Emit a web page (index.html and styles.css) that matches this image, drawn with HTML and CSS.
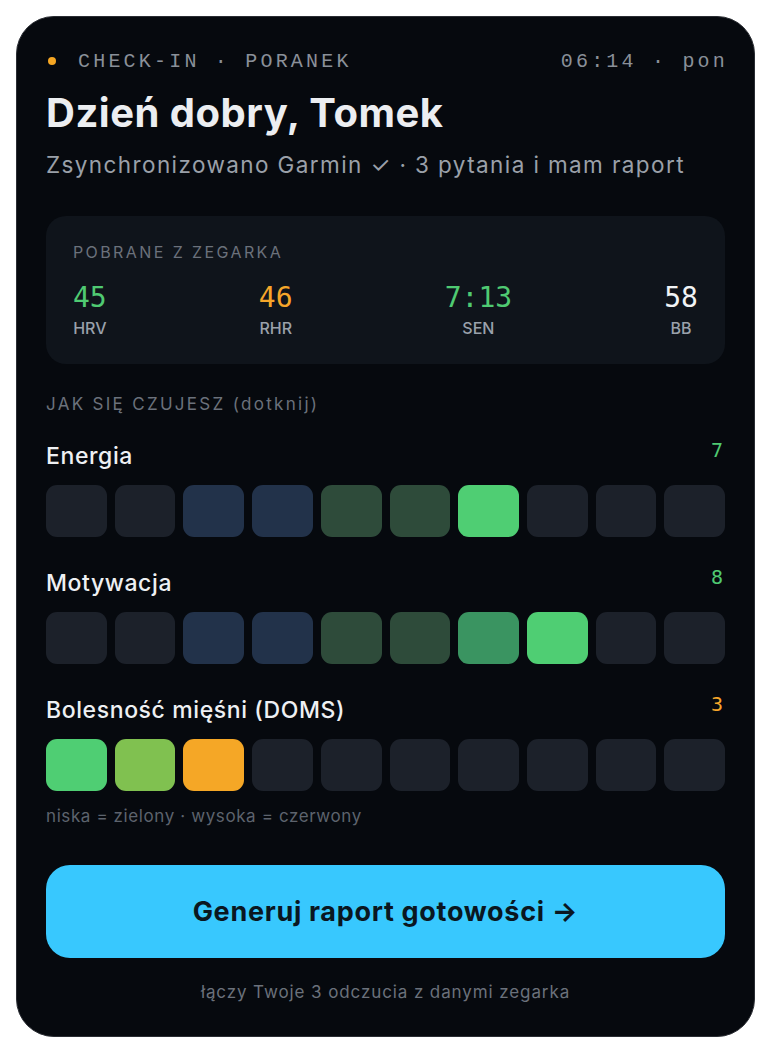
FILE: index.html
```html
<!DOCTYPE html>
<html lang="pl">
<head>
    <meta charset="UTF-8">
    <meta name="viewport" content="width=device-width, initial-scale=1.0">
    <link rel="stylesheet" href="styles.css">
</head>
<body>
    <div class="card">
        <div class="top-bar">
            <span class="top-left"><span class="dot"></span>CHECK-IN · PORANEK</span>
            <span class="top-right">06:14 · pon</span>
        </div>

        <h1 class="title">Dzień dobry, Tomek</h1>
        <p class="subtitle">Zsynchronizowano Garmin ✓ · 3 pytania i mam raport</p>

        <div class="watch-panel">
            <div class="panel-label">POBRANE Z ZEGARKA</div>
            <div class="stats">
                <div class="stat">
                    <div class="stat-value good">45</div>
                    <div class="stat-name">HRV</div>
                </div>
                <div class="stat">
                    <div class="stat-value warn">46</div>
                    <div class="stat-name">RHR</div>
                </div>
                <div class="stat">
                    <div class="stat-value good">7:13</div>
                    <div class="stat-name">SEN</div>
                </div>
                <div class="stat">
                    <div class="stat-value plain">58</div>
                    <div class="stat-name">BB</div>
                </div>
            </div>
        </div>

        <div class="section-label">JAK SIĘ CZUJESZ (dotknij)</div>

        <div class="rating">
            <div class="rating-head">
                <span class="rating-name">Energia</span>
                <span class="rating-value good">7</span>
            </div>
            <div class="scale">
                <span class="cell"></span>
                <span class="cell"></span>
                <span class="cell blue"></span>
                <span class="cell blue"></span>
                <span class="cell moss"></span>
                <span class="cell moss"></span>
                <span class="cell green"></span>
                <span class="cell"></span>
                <span class="cell"></span>
                <span class="cell"></span>
            </div>
        </div>

        <div class="rating">
            <div class="rating-head">
                <span class="rating-name">Motywacja</span>
                <span class="rating-value good">8</span>
            </div>
            <div class="scale">
                <span class="cell"></span>
                <span class="cell"></span>
                <span class="cell blue"></span>
                <span class="cell blue"></span>
                <span class="cell moss"></span>
                <span class="cell moss"></span>
                <span class="cell leaf"></span>
                <span class="cell green"></span>
                <span class="cell"></span>
                <span class="cell"></span>
            </div>
        </div>

        <div class="rating">
            <div class="rating-head">
                <span class="rating-name">Bolesność mięśni (DOMS)</span>
                <span class="rating-value warn">3</span>
            </div>
            <div class="scale">
                <span class="cell green"></span>
                <span class="cell lime"></span>
                <span class="cell orange"></span>
                <span class="cell"></span>
                <span class="cell"></span>
                <span class="cell"></span>
                <span class="cell"></span>
                <span class="cell"></span>
                <span class="cell"></span>
                <span class="cell"></span>
            </div>
            <div class="hint">niska = zielony · wysoka = czerwony</div>
        </div>

        <button class="report-btn" type="button">Generuj raport gotowości →</button>
        <div class="footnote">łączy Twoje 3 odczucia z danymi zegarka</div>
    </div>
</body>
</html>
```

FILE: styles.css
```css
body {
    margin: 0;
    padding: 16px;
    background-color: #fff;
    font-family: Inter, "Noto Sans", sans-serif;
}

.card {
    width: 739px;
    box-sizing: border-box;
    background-color: #06090e; /* near black */
    border: 1.5px solid #2a2d33;
    border-radius: 38px;
    padding: 28px 29px 32px 29px;
    color: #eef0f3;
}

.top-bar {
    display: flex;
    justify-content: space-between;
    align-items: center;
    height: 32px;
    font-family: "Liberation Mono", monospace;
    font-size: 20px;
    letter-spacing: 3.2px;
    color: #8a9099;
}

.top-left {
    display: flex;
    align-items: center;
}

.top-right {
    margin-right: -3px;
}

.dot {
    width: 8px;
    height: 8px;
    border-radius: 50%;
    background-color: #f5a623;
    margin: 0 22px 0 2px;
}

.title {
    margin: 12px 0 0 0;
    font-size: 40px;
    line-height: 48px;
    font-weight: 700;
    letter-spacing: 0.5px;
    color: #eceef1;
}

.subtitle {
    margin: 13px 0 0 0;
    font-size: 22.5px;
    line-height: 30px;
    letter-spacing: 1.4px;
    color: #9aa0a9;
}

.watch-panel {
    margin-top: 36px;
    background-color: #0f141b;
    border-radius: 20px;
    padding: 25px 27px 25px 27px;
}

.panel-label {
    font-size: 16px;
    line-height: 22px;
    letter-spacing: 2.4px;
    color: #6b717b;
}

.stats {
    display: flex;
    justify-content: space-between;
    margin-top: 17px;
}

.stat {
    text-align: center;
}

.stat-value {
    font-family: "DejaVu Sans Mono", monospace;
    font-size: 28px;
    line-height: 36px;
    margin-bottom: 1px;
}

.stat-name {
    font-size: 16px;
    line-height: 22px;
    font-weight: 500;
    color: #9aa1ab;
}

.good { color: #4fca72; }
.warn { color: #f5a62a; }
.plain { color: #f1f3f5; }

.section-label {
    margin-top: 29px;
    font-size: 17px;
    line-height: 22px;
    letter-spacing: 2.3px;
    color: #6b717b;
}

.rating {
    margin-top: 26px;
}

.rating + .rating {
    margin-top: 31px;
}

.rating-head {
    display: flex;
    justify-content: space-between;
    align-items: flex-start;
}

.rating-name {
    font-size: 23px;
    line-height: 30px;
    font-weight: 500;
    letter-spacing: 0.6px;
    color: #eef0f3;
}

.rating-value {
    font-family: "DejaVu Sans Mono", monospace;
    font-size: 20px;
    line-height: 20px;
    margin-top: -1px;
    margin-right: 2px;
}

.scale {
    display: grid;
    grid-template-columns: repeat(10, 1fr);
    gap: 8px;
    margin-top: 14px;
}

.cell {
    height: 52px;
    border-radius: 11px;
    background-color: #1c212a;
}

.cell.blue { background-color: #22324a; }
.cell.moss { background-color: #2e4b3a; }
.cell.leaf { background-color: #3a9461; }
.cell.green { background-color: #4fce73; }
.cell.lime { background-color: #80c150; }
.cell.orange { background-color: #f5a726; }

.hint {
    margin-top: 13px;
    font-size: 17px;
    line-height: 24px;
    letter-spacing: 0.6px;
    color: #5d636d;
}

.report-btn {
    display: block;
    width: 100%;
    height: 93px;
    margin-top: 37px;
    border: none;
    border-radius: 24px;
    background-color: #38c8fe;
    color: #0a1721;
    font-family: Inter, "Noto Sans", sans-serif;
    font-size: 27px;
    font-weight: 700;
    letter-spacing: 0.7px;
    cursor: pointer;
}

.footnote {
    margin-top: 22px;
    text-align: center;
    font-size: 17px;
    line-height: 24px;
    letter-spacing: 0.9px;
    color: #6b717b;
}
```
